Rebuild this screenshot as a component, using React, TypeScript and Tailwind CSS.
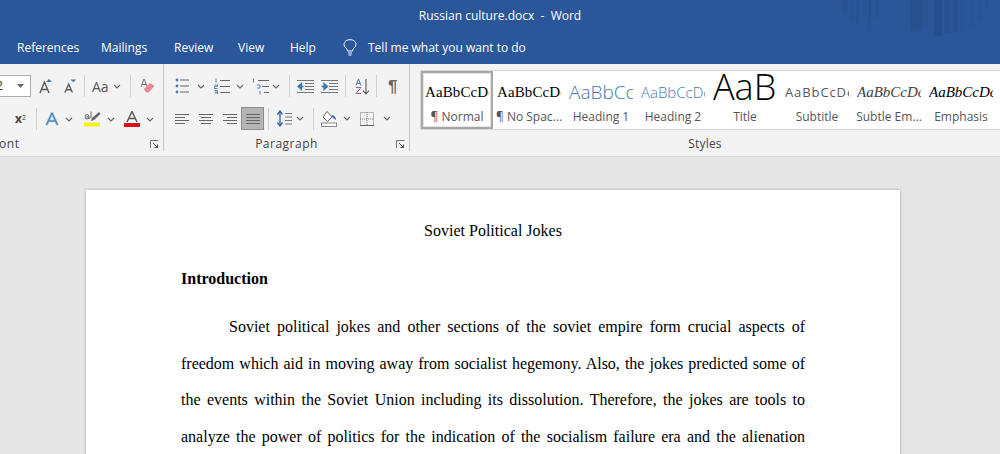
import type { ReactNode } from "react";

const ui = "font-['Open_Sans','Noto_Sans',sans-serif]";

const tabs = [
  { label: "References", cls: "w-[57px]" },
  { label: "Mailings", cls: "w-[46px] ml-[27px]" },
  { label: "Review", cls: "w-[37px] ml-[27px]" },
  { label: "View", cls: "w-[25px] ml-[27px]" },
  { label: "Help", cls: "w-[25px] ml-[27px]" },
];

const styles = [
  { name: "¶ Normal", preview: "AaBbCcDc", cls: "font-['Liberation_Serif',serif] text-[15px] text-black pt-[8px] tracking-[0.1px]", active: true },
  { name: "¶ No Spac...", preview: "AaBbCcDc", cls: "font-['Liberation_Serif',serif] text-[15px] text-black pt-[8px] tracking-[0.1px]" },
  { name: "Heading 1", preview: "AaBbCcDc", cls: "font-['Open_Sans',sans-serif] text-[19px] text-[#3f78ad] pt-[5px] font-light" },
  { name: "Heading 2", preview: "AaBbCcDc", cls: "font-['Open_Sans',sans-serif] text-[15px] text-[#3f78ad] pt-[8px] font-light" },
  { name: "Title", preview: "AaBbCc", cls: "font-['Open_Sans',sans-serif] text-[36px] leading-[40px] text-black -mt-[6px] font-light" },
  { name: "Subtitle", preview: "AaBbCcDc", cls: "font-['Open_Sans',sans-serif] text-[13px] text-[#595959] pt-[10px] tracking-[0.9px]" },
  { name: "Subtle Em...", preview: "AaBbCcDc", cls: "font-['Liberation_Serif',serif] italic text-[15px] text-[#404040] pt-[8px]" },
  { name: "Emphasis", preview: "AaBbCcDc", cls: "font-['Liberation_Serif',serif] italic text-[15px] text-black pt-[8px]" },
];

const body = [
  "freedom which aid in moving away from socialist hegemony. Also, the jokes predicted some of",
  "the events within the Soviet Union including its dissolution. Therefore, the jokes are tools to",
  "analyze the power of politics for the indication of the socialism failure era and the alienation from",
];

function Chevron({ cls = "" }: { cls?: string }) {
  return (
    <svg width="8" height="5" viewBox="0 0 8 5" className={cls}>
      <path d="M1 1 L4 4 L7 1" fill="none" stroke="#666" strokeWidth="1.1" />
    </svg>
  );
}

function Sep({ cls = "" }: { cls?: string }) {
  return <div className={"w-px h-[22px] bg-[#d2d2d2] " + cls} />;
}

function Launcher() {
  return (
    <svg width="9" height="9" viewBox="0 0 9 9">
      <path d="M0.5 8 V0.5 H8.5" fill="none" stroke="#777" />
      <path d="M3 3 L7.5 7.5 M7.5 4.5 V7.5 H4.5" fill="none" stroke="#555" />
    </svg>
  );
}

function Lines({ kind }: { kind: "left" | "center" | "right" | "justify" }) {
  const rows: Record<string, number[][]> = {
    left: [[1, 15], [1, 11], [1, 15], [1, 11]],
    center: [[1, 15], [3, 13], [1, 15], [3, 13]],
    right: [[1, 15], [5, 15], [1, 15], [5, 15]],
    justify: [[1, 15], [1, 15], [1, 15], [1, 15]],
  };
  return (
    <svg width="16" height="12" viewBox="0 0 16 12">
      {rows[kind].map(([a, b], i) => (
        <path key={i} d={`M${a} ${1.5 + i * 3} H${b}`} stroke="#666" strokeWidth="1" />
      ))}
    </svg>
  );
}

function Bullets() {
  return (
    <svg width="14" height="16" viewBox="0 0 14 16">
      {[2, 8, 14].map((y) => (
        <g key={y}>
          <circle cx="2" cy={y} r="1.4" fill="#4a7ab0" />
          <path d={`M5 ${y} H14`} stroke="#666" />
        </g>
      ))}
    </svg>
  );
}

function Numbering() {
  return (
    <svg width="16" height="16" viewBox="0 0 16 16">
      {[2.5, 8.5, 14.5].map((y) => (
        <path key={y} d={`M6 ${y} H16`} stroke="#666" />
      ))}
      <path d="M2 0.5 V4.5 M0.5 7 H3.5 V8.5 H0.5 V10.5 H3.5 M0.5 12.5 H3.5 V16 H0.5 M1 14.2 H3.5" fill="none" stroke="#4a7ab0" strokeWidth="0.9" />
    </svg>
  );
}

function Multilevel() {
  return (
    <svg width="17" height="17" viewBox="0 0 17 17">
      <path d="M6 2.5 H17 M10 8.5 H17 M12 14.5 H17" stroke="#666" />
      <path d="M1.5 0.5 V4.5 M5 7 H8 V10 H5 M8 13 V16.5" fill="none" stroke="#4a7ab0" strokeWidth="0.9" />
    </svg>
  );
}

function Indent({ out }: { out?: boolean }) {
  return (
    <svg width="17" height="13" viewBox="0 0 17 13">
      <path d="M0 0.5 H17 M8 3.5 H17 M8 6.5 H17 M8 9.5 H17 M0 12.5 H17" stroke="#777" />
      {out ? (
        <path d="M6.5 6.5 H3 M4.5 3.5 L1 6.5 L4.5 9.5 Z" fill="#3f78ad" stroke="#3f78ad" strokeWidth="1.4" />
      ) : (
        <path d="M0.5 6.5 H4 M3 3.5 L6.5 6.5 L3 9.5 Z" fill="#3f78ad" stroke="#3f78ad" strokeWidth="1.4" />
      )}
    </svg>
  );
}

function SortIcon() {
  return (
    <svg width="15" height="17" viewBox="0 0 15 17">
      <path d="M1 7.5 L3.5 1 L6 7.5 M2 5.5 H5" fill="none" stroke="#4a7ab0" />
      <path d="M1 9.5 H6 L1 15.5 H6" fill="none" stroke="#8a5fa8" />
      <path d="M11 1 V16 M8 12.5 L11 16 L14 12.5" fill="none" stroke="#555" strokeWidth="1.1" />
    </svg>
  );
}

function LineSpacing() {
  return (
    <svg width="15" height="17" viewBox="0 0 15 17">
      <path d="M3 1 V16 M0.5 4.5 L3 1 L5.5 4.5 M0.5 12.5 L3 16 L5.5 12.5" fill="none" stroke="#2f6aa8" strokeWidth="1.3" />
      <path d="M8 3.5 H15 M8 7 H15 M8 10.5 H15 M8 14 H15" stroke="#777" />
    </svg>
  );
}

function Shading() {
  return (
    <svg width="16" height="16" viewBox="0 0 16 16">
      <path d="M6 0.5 L11 6 L6.5 10.5 L2 6 Z" fill="#fff" stroke="#666" />
      <path d="M4 1.5 L6 0.5 M11 4 Q15 5 15 9 Q13 8 11 6 Z" fill="#3f6ea5" />
      <rect x="0.5" y="12" width="15" height="3.5" fill="#fff" stroke="#888" />
    </svg>
  );
}

function Borders() {
  return (
    <svg width="14" height="14" viewBox="0 0 14 14">
      <rect x="0.5" y="0.5" width="13" height="13" fill="none" stroke="#777" strokeDasharray="1 1" />
      <path d="M7 0 V14 M0 7 H14" stroke="#777" strokeDasharray="1 1" />
      <path d="M0 13.5 H14" stroke="#666" />
    </svg>
  );
}

function GrowFont({ small }: { small?: boolean }) {
  return (
    <svg width={small ? 13 : 14} height="15" viewBox="0 0 14 15">
      <path d={small ? "M1 14 L5 5 L9 14 M2.6 11 H7.4" : "M1 14 L5.5 3 L10 14 M2.6 10.5 H8.4"} fill="none" stroke="#555" strokeWidth="1.4" />
      <path d={small ? "M7 0 H13 L10 3 Z" : "M7 3 L10 0 L13 3 Z"} fill="#3f78ad" />
    </svg>
  );
}

function Eraser() {
  return (
    <svg width="15" height="16" viewBox="0 0 15 16">
      <path d="M1 9 L4 1 L7 8 M2 6.5 H6" fill="none" stroke="#777" />
      <path d="M4 11 L10 5 L14.5 8 L8.5 14.5 L6 14.5 Z" fill="#e88a98" />
    </svg>
  );
}

function TextEffects() {
  return (
    <svg width="14" height="14" viewBox="0 0 14 14">
      <path d="M1.5 13 L7 1 L12.5 13 M4 9 H10" fill="none" stroke="#9dbfe0" strokeWidth="2.6" />
      <path d="M1.5 13 L7 1 L12.5 13 M4 9 H10" fill="none" stroke="#3f78ad" strokeWidth="1" />
    </svg>
  );
}

function Highlighter() {
  return (
    <svg width="17" height="16" viewBox="0 0 17 16">
      <path d="M8 7 L15 1 L16.5 3 L10 9 L7 10 Z" fill="#666" />
      <rect x="0" y="11.5" width="16" height="4" fill="#f5ef1d" />
      <path d="M1 6 Q1 3.5 3 3.5 Q5 3.5 5 6 V8 M5 6 Q3 5.5 1.5 6.5 Q0.5 8 3 8 L5 7" fill="none" stroke="#555" strokeWidth="0.9" />
      <path d="M7 0.5 V7.5" stroke="#555" strokeWidth="0.9" />
    </svg>
  );
}

function FontColor() {
  return (
    <svg width="16" height="16" viewBox="0 0 16 16">
      <path d="M3 11 L8 0.5 L13 11 M5 7.5 H11" fill="none" stroke="#555" strokeWidth="1.4" />
      <rect x="0" y="12" width="16" height="4" fill="#d8111b" />
    </svg>
  );
}

function Bulb() {
  return (
    <svg width="14" height="17" viewBox="0 0 14 17">
      <path d="M4.5 12 C4.5 9 1 8.5 1 5.5 C1 2.5 3.6 0.7 7 0.7 C10.4 0.7 13 2.5 13 5.5 C13 8.5 9.5 9 9.5 12 Z" fill="none" stroke="#fff" />
      <path d="M5 14 H9 M5.5 16 H8.5" stroke="#fff" />
    </svg>
  );
}

function Watermark() {
  const bars = [
    [843, 5, 15, 0.16], [850, 4, 20, 0.1], [856, 3, 24, 0.18], [862, 5, 15, 0.1], [868, 3, 31, 0.2], [875, 4, 18, 0.12],
    [910, 12, 31, 0.24], [922, 6, 28, 0.08], [934, 8, 36, 0.26], [944, 6, 33, 0.14], [953, 5, 32, 0.2], [960, 4, 32, 0.1], [970, 4, 28, 0.14], [978, 4, 20, 0.1], [985, 3, 12, 0.1],
  ];
  return (
    <svg width="1000" height="40" viewBox="0 0 1000 40" className="absolute left-0 top-0 pointer-events-none">
      {bars.map(([x, w, h, o]) => (
        <rect key={x} x={x} y="0" width={w} height={h} fill="#1c3a6e" opacity={o} />
      ))}
    </svg>
  );
}

function Label({ children, cls }: { children: ReactNode; cls: string }) {
  return <div className={"text-[12px] leading-[16px] text-[#444] " + cls}>{children}</div>;
}

export default function App() {
  return (
    <div className={"relative w-[1000px] h-[454px] overflow-hidden flex flex-col bg-[#e6e6e6] " + ui}>
      <header className="relative h-[64px] shrink-0 bg-[#2b579a] text-white text-[12px]">
        <Watermark />
        <div className="relative h-[32px] flex items-center justify-center pb-[1px]">
          Russian culture.docx&nbsp; - &nbsp;Word
        </div>
        <nav className="relative h-[32px] flex items-center pl-[17px] pb-[1px]">
          {tabs.map((t) => (
            <span key={t.label} className={t.cls + " whitespace-nowrap"}>{t.label}</span>
          ))}
          <span className="ml-[28px] mr-[11px] flex"><Bulb /></span>
          <span className="whitespace-nowrap">Tell me what you want to do</span>
        </nav>
      </header>

      <section className="h-[93px] shrink-0 flex bg-[#f3f3f3] border-b border-[#d6d6d6]">
        {/* Font */}
        <div className="w-[164px] shrink-0 flex flex-col border-r border-[#c6c6c6] mb-[5px]">
          <div className="h-[22px] mt-[11px] flex items-center">
            <div className="w-[31px] h-[22px] flex items-center justify-between bg-white border border-l-0 border-[#ababab] pr-[6px] text-[12px] text-[#333]">
              <span className="-ml-[4px]">2</span>
              <svg width="7" height="4" viewBox="0 0 7 4"><path d="M0 0 H7 L3.5 4 Z" fill="#666" /></svg>
            </div>
            <span className="ml-[8px] flex"><GrowFont /></span>
            <span className="ml-[11px] flex"><GrowFont small /></span>
            <Sep cls="ml-[7px]" />
            <span className="ml-[7px] text-[14px] text-[#555]">Aa</span>
            <Chevron cls="ml-[4px]" />
            <Sep cls="ml-[9px]" />
            <span className="ml-[9px] flex"><Eraser /></span>
          </div>
          <div className="h-[22px] mt-[11px] flex items-center">
            <span className="ml-[15px] w-[12px] text-[12px] font-bold text-[#444] leading-none whitespace-nowrap">
              x<sup className="text-[7px] font-normal">2</sup>
            </span>
            <Sep cls="ml-[9px]" />
            <span className="ml-[8px] flex"><TextEffects /></span>
            <Chevron cls="ml-[6px]" />
            <span className="ml-[11px] flex"><Highlighter /></span>
            <Chevron cls="ml-[6px]" />
            <span className="ml-[9px] flex"><FontColor /></span>
            <Chevron cls="ml-[6px]" />
          </div>
          <div className="mt-auto flex items-center justify-between pr-[4px] -mb-[1px]">
            <Label cls="-ml-[1px] tracking-[0.6px]">ont</Label>
            <Launcher />
          </div>
        </div>

        {/* Paragraph */}
        <div className="w-[246px] shrink-0 flex flex-col border-r border-[#c6c6c6] mb-[5px]">
          <div className="h-[22px] mt-[11px] flex items-center pl-[11px]">
            <Bullets />
            <Chevron cls="ml-[8px]" />
            <span className="ml-[9px] flex"><Numbering /></span>
            <Chevron cls="ml-[6px]" />
            <span className="ml-[8px] flex"><Multilevel /></span>
            <Chevron cls="ml-[3px]" />
            <Sep cls="ml-[9px]" />
            <span className="ml-[7px] flex"><Indent out /></span>
            <span className="ml-[7px] flex"><Indent /></span>
            <Sep cls="ml-[7px]" />
            <span className="ml-[9px] flex"><SortIcon /></span>
            <Sep cls="ml-[6px]" />
            <span className="ml-[11px] text-[17px] leading-none text-[#666] font-['Liberation_Sans',sans-serif] font-bold">¶</span>
          </div>
          <div className="h-[23px] mt-[10px] flex items-center pl-[10px]">
            <Lines kind="left" />
            <span className="ml-[8px] flex"><Lines kind="center" /></span>
            <span className="ml-[8px] flex"><Lines kind="right" /></span>
            <span className="ml-[3px] w-[23px] h-[23px] flex items-center justify-center bg-[#b5b5b5] border border-[#8e8e8e]">
              <Lines kind="justify" />
            </span>
            <Sep cls="ml-[4px]" />
            <span className="ml-[8px] flex"><LineSpacing /></span>
            <Chevron cls="ml-[4px]" />
            <Sep cls="ml-[9px]" />
            <span className="ml-[7px] flex"><Shading /></span>
            <Chevron cls="ml-[6px]" />
            <span className="ml-[9px] flex"><Borders /></span>
            <Chevron cls="ml-[9px]" />
          </div>
          <div className="mt-auto relative flex items-center justify-center -mb-[1px]">
            <Label cls="tracking-[0.5px]">Paragraph</Label>
            <span className="absolute right-[4px] top-[4px] flex"><Launcher /></span>
          </div>
        </div>

        {/* Styles */}
        <div className="flex-1 min-w-0 flex flex-col pl-[10px] mb-[5px]">
          <div className="h-[60px] mt-[6px] flex bg-white border border-r-0 border-[#d8d8d8] items-stretch">
            {styles.map((s) => (
              <div
                key={s.name}
                className={
                  "w-[72px] shrink-0 flex flex-col items-center overflow-hidden " +
                  (s.active ? "border-2 border-[#a8a8a8] outline outline-1 -outline-offset-[3px] outline-[#e4e4e4]" : "border-2 border-white")
                }
              >
                <div className="h-[35px] w-[64px] overflow-hidden text-center">
                  <div className={"whitespace-nowrap " + s.cls}>{s.preview}</div>
                </div>
                <div className="mt-[1px] text-[12px] leading-[16px] text-[#555] whitespace-nowrap">{s.name}</div>
              </div>
            ))}
          </div>
          <div className="mt-auto flex justify-center pr-[10px] -mb-[1px]">
            <Label cls="tracking-[0.2px]">Styles</Label>
          </div>
        </div>
      </section>

      <main className="flex-1 min-h-0 pt-[33px] pl-[86px] overflow-hidden">
        <article className="w-[814px] h-[400px] bg-white shadow-[0_0_3px_rgba(0,0,0,0.3)] pt-[29px] pl-[95px] pr-[95px] font-['Liberation_Serif',serif] text-[16px] leading-[24px] text-black">
          <h1 className="text-center font-normal">Soviet Political Jokes</h1>
          <h2 className="mt-[24px] font-bold">Introduction</h2>
          <p className="mt-[24px] pl-[48px] text-justify [text-align-last:justify] whitespace-nowrap">
            Soviet political jokes and other sections of the soviet empire form crucial aspects of
          </p>
          {body.map((line) => (
            <p key={line} className="mt-[12.5px] text-justify [text-align-last:justify]">{line}</p>
          ))}
        </article>
      </main>
    </div>
  );
}
